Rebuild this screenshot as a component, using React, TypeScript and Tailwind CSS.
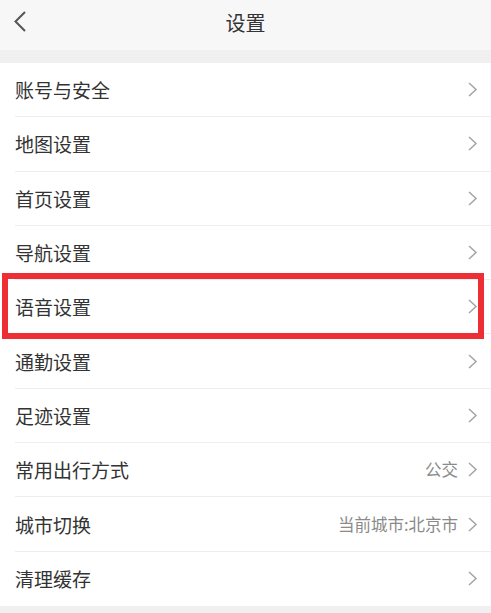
import React from 'react'

const rows: { label: string; value?: string }[] = [
  { label: '账号与安全' },
  { label: '地图设置' },
  { label: '首页设置' },
  { label: '导航设置' },
  { label: '语音设置' },
  { label: '通勤设置' },
  { label: '足迹设置' },
  { label: '常用出行方式', value: '公交' },
  { label: '城市切换', value: '当前城市:北京市' },
  { label: '清理缓存' },
]

const Chevron = () => (
  <svg width="11" height="17" viewBox="0 0 11 17" className="shrink-0">
    <path d="M2 2 L9 8.5 L2 15" fill="none" stroke="#a4a4a4" strokeWidth="1.5" />
  </svg>
)

export default function App() {
  return (
    <div
      className="w-[491px] h-[613px] bg-[#f0f0f0] overflow-hidden relative text-[#333]"
      style={{ fontFamily: '"Noto Sans CJK SC", "Noto Sans", sans-serif' }}
    >
      {/* header */}
      <div className="h-[50px] bg-[#f8f7f8] flex items-center pb-[5px] relative">
        <svg width="14" height="24" viewBox="0 0 14 24" className="absolute left-[13px] top-[10px]">
          <path d="M12 2 L2.5 11.5 L12 21" fill="none" stroke="#555" strokeWidth="2" />
        </svg>
        <div className="flex-1 text-center text-[20px] leading-none text-[#333]">设置</div>
      </div>

      <div className="h-[13px]" />

      <div className="bg-white">
        {rows.map((r, i) => (
          <div key={i} className="pl-[15px] h-[54.3px]">
            <div
              className={`h-full flex items-center pr-[13px] ${
                i < rows.length - 1 ? 'border-b border-[#eeeeee]' : ''
              }`}
            >
              <span className="flex-1 text-[19px] leading-none">{r.label}</span>
              {r.value && (
                <span className="text-[16.5px] text-[#8a8a8a] mr-[9px] leading-none">{r.value}</span>
              )}
              <Chevron />
            </div>
          </div>
        ))}
      </div>

      {/* highlight box */}
      <div className="absolute left-[2px] top-[273px] w-[482px] h-[66px] border-[6px] border-[#ee2e35]" />
    </div>
  )
}
